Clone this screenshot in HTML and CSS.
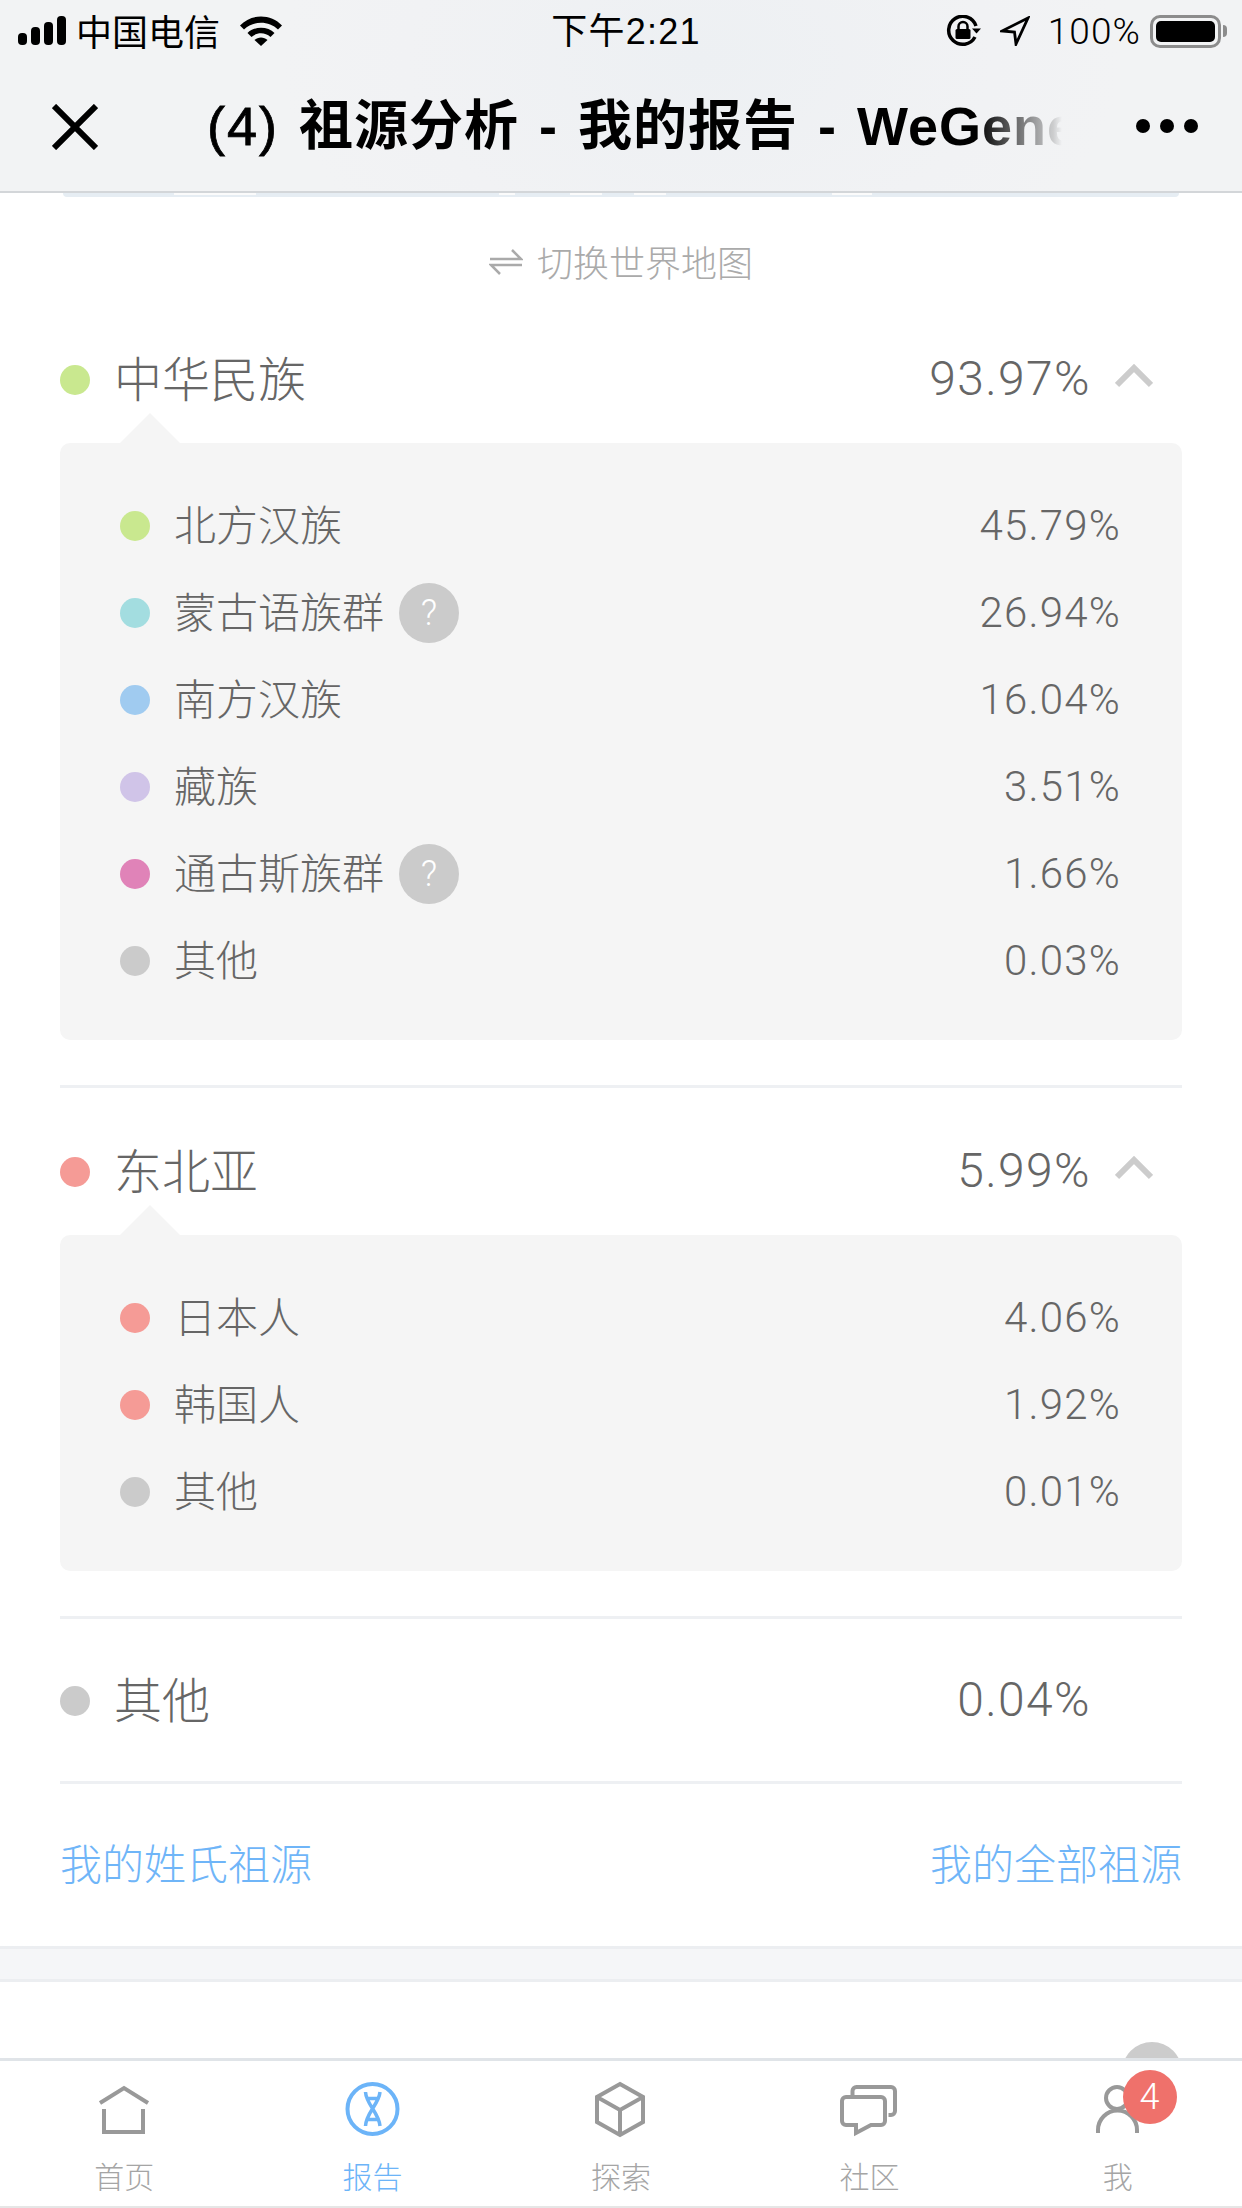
FILE: index.html
```html
<!DOCTYPE html>
<html lang="zh">
<head>
<meta charset="utf-8">
<title>祖源分析</title>
<link rel="stylesheet" href="styles.css">
</head>
<body>
<div class="phone">
  <header class="top">
    <div class="status">
      <div class="status-left">
        <svg class="signal" width="48" height="30" viewBox="0 0 48 30"><rect x="0" y="17" width="9" height="12" rx="4"/><rect x="13" y="11" width="9" height="18" rx="4"/><rect x="26" y="6" width="9" height="23" rx="4"/><rect x="39" y="0" width="9" height="29" rx="4"/></svg>
        <span class="carrier">中国电信</span>
        <svg class="wifi" width="42" height="30" viewBox="0 0 42 30"><path d="M0 9.500C11-2.500 31-2.500 42 9.500L38 13.500C29 4.500 13 4.500 4 13.500Z"/><path d="M7.500 17C14 10 28 10 34.500 17L30.500 21C25 16 17 16 11.500 21Z"/><path d="M14.500 24C18 20.500 24 20.500 27.500 24L21 30Z"/></svg>
      </div>
      <div class="clock">下午2:21</div>
      <div class="status-right">
        <svg class="lock" width="36" height="32" viewBox="0 0 36 32"><path class="lock-ring" d="M29 22A14 14 0 1 1 30 11"/><path d="M35 13.500H26L30.500 18.500Z"/><rect x="9.500" y="14" width="15" height="10" rx="1.500"/><path class="lock-ring thin" d="M12.500 14V11.500a4.500 4.500 0 0 1 9 0V14"/></svg>
        <svg class="arrow" width="30" height="30" viewBox="0 0 30 30"><path d="M28 2L2 15L14.500 16L16 28Z"/></svg>
        <span class="battery-pct">100%</span>
        <div class="battery"><div class="battery-fill"></div></div>
        <div class="battery-nub"></div>
      </div>
    </div>
    <nav class="bar">
      <svg class="close" width="46" height="46" viewBox="0 0 46 46"><path d="M2 2L44 44M44 2L2 44"/></svg>
      <h1 class="title"><span class="count">(4)</span> 祖源分析 - 我的报告 - WeGene</h1>
      <div class="more"><i></i><i></i><i></i></div>
    </nav>
  </header>

  <main class="content">
    <div class="map-edge"><i class="e1"></i><i class="e2"></i><i class="e3"></i><i class="e4"></i><i class="e5"></i></div>
    <div class="switch">
      <svg width="34" height="28" viewBox="0 0 34 28"><path d="M1 11H32L23 2M33 17H2L11 26"/></svg>
      <span>切换世界地图</span>
    </div>

    <section class="groups">
      <div class="head">
        <span class="dot d-green"></span><span class="head-name">中华民族</span>
        <span class="head-pct">93.97%</span>
        <svg class="chev" width="38" height="24" viewBox="0 0 38 24"><path d="M2 21L19 4L36 21"/></svg>
      </div>
      <div class="panel">
        <div class="row"><span class="dot d-green"></span><span class="row-name">北方汉族</span><span class="row-pct">45.79%</span></div>
        <div class="row"><span class="dot d-teal"></span><span class="row-name">蒙古语族群</span><span class="help">?</span><span class="row-pct">26.94%</span></div>
        <div class="row"><span class="dot d-blue"></span><span class="row-name">南方汉族</span><span class="row-pct">16.04%</span></div>
        <div class="row"><span class="dot d-purple"></span><span class="row-name">藏族</span><span class="row-pct">3.51%</span></div>
        <div class="row"><span class="dot d-pink"></span><span class="row-name">通古斯族群</span><span class="help">?</span><span class="row-pct">1.66%</span></div>
        <div class="row"><span class="dot d-grey"></span><span class="row-name">其他</span><span class="row-pct">0.03%</span></div>
      </div>
      <hr class="rule rule-a">
      <div class="head head-b">
        <span class="dot d-salmon"></span><span class="head-name">东北亚</span>
        <span class="head-pct">5.99%</span>
        <svg class="chev" width="38" height="24" viewBox="0 0 38 24"><path d="M2 21L19 4L36 21"/></svg>
      </div>
      <div class="panel">
        <div class="row"><span class="dot d-salmon"></span><span class="row-name">日本人</span><span class="row-pct">4.06%</span></div>
        <div class="row"><span class="dot d-salmon"></span><span class="row-name">韩国人</span><span class="row-pct">1.92%</span></div>
        <div class="row"><span class="dot d-grey"></span><span class="row-name">其他</span><span class="row-pct">0.01%</span></div>
      </div>
      <hr class="rule rule-a">
      <div class="head head-c">
        <span class="dot d-grey"></span><span class="head-name">其他</span>
        <span class="head-pct">0.04%</span>
        <span class="chev-slot"></span>
      </div>
      <hr class="rule">
      <div class="links"><span>我的姓氏祖源</span><span>我的全部祖源</span></div>
    </section>

    <div class="gap"></div>
    <div class="next"><span class="next-circle"></span></div>
  </main>

  <footer class="tabs">
    <div class="tab">
      <svg width="64" height="60" viewBox="0 0 64 60"><path d="M8 23L32 8L56 23M12 29V52H51V29"/></svg>
      <span>首页</span>
    </div>
    <div class="tab on">
      <svg width="64" height="60" viewBox="0 0 64 60"><circle cx="31.500" cy="29" r="25"/><path class="dna" d="M24.500 12C25 24 38 33 39 46M39 12C38 24 25 33 24.500 46M26 18.500H38M25 39.500H38.500"/></svg>
      <span>报告</span>
    </div>
    <div class="tab">
      <svg width="64" height="60" viewBox="0 0 64 60"><path d="M31 4L54 17V42L31 55L8 42V17ZM8 17L31 30L54 17M31 30V55"/></svg>
      <span>探索</span>
    </div>
    <div class="tab">
      <svg width="64" height="60" viewBox="0 0 64 60"><path d="M9 17H44a4 4 0 0 1 4 4V41a4 4 0 0 1-4 4H34L19 53V45H9a4 4 0 0 1-4-4V21a4 4 0 0 1 4-4Z"/><path d="M15.500 15V11a4 4 0 0 1 4-4H54a4 4 0 0 1 4 4V31a4 4 0 0 1-4 4H51.500"/></svg>
      <span>社区</span>
    </div>
    <div class="tab">
      <svg width="64" height="60" viewBox="0 0 64 60"><circle cx="31" cy="18" r="11"/><path d="M12 53V50A19.500 19.500 0 0 1 51 50V53"/></svg>
      <span>我</span>
      <b class="badge">4</b>
    </div>
  </footer>
</div>
</body>
</html>
```

FILE: styles.css
```css
* { box-sizing: border-box; }
html, body { margin: 0; padding: 0; background: #fff; }
body {
  font-family: "Noto Sans CJK SC", "Noto Sans", sans-serif;
  color: #666;
}
.phone {
  width: 1242px;
  height: 2208px;
  overflow: hidden;
  display: flex;
  flex-direction: column;
  background: #fff;
}

/* top chrome */
.top {
  flex: none;
  height: 193px;
  border-bottom: 2px solid #d3d6d9;
  background: radial-gradient(ellipse 420px 260px at 700px 60px, #edf0f3 0%, #f1f2f4 70%, #f2f3f4 100%);
  color: #000;
}
.status {
  height: 60px;
  display: grid;
  grid-template-columns: 1fr auto 1fr;
  align-items: center;
  font-size: 36px;
  line-height: 60px;
}
.status-left { display: flex; align-items: center; padding-left: 18px; }
.signal { margin-right: 10px; }
.signal rect { fill: #000; }
.carrier { font-family: "Noto Sans CJK SC", sans-serif; font-weight: 400; padding-bottom: 2px; line-height: 56px; }
.wifi { margin-left: 20px; }
.clock {
  font-family: "Liberation Sans", "Noto Sans CJK SC", sans-serif;
  font-size: 36px;
  font-weight: 400;
  letter-spacing: 1.200px;
  padding-top: 2px;
  margin-left: 10px;
}
.status-right {
  display: flex;
  align-items: center;
  justify-content: flex-end;
  padding-right: 15px;
}
.lock-ring { fill: none; stroke: #000; stroke-width: 3.500; }
.lock-ring.thin { stroke-width: 2.500; }
.arrow { margin-left: 18px; }
.arrow path { fill: none; stroke: #000; stroke-width: 2.800; stroke-linejoin: miter; }
.battery-pct {
  margin-left: 18px;
  font-family: "Roboto", sans-serif;
  font-weight: 300;
  font-size: 37px;
  letter-spacing: 1.100px;
  padding-top: 2px;
}
.battery {
  margin-left: 9px;
  width: 71px;
  height: 33px;
  border: 3px solid #8c8c8c;
  border-radius: 10px;
  padding: 3px;
}
.battery-fill { height: 100%; background: #000; border-radius: 5px; }
.battery-nub {
  width: 4px;
  height: 12px;
  margin-left: 2px;
  background: #8c8c8c;
  border-radius: 0 4px 4px 0;
}
.bar {
  height: 131px;
  display: flex;
  align-items: center;
  padding: 0 44px 0 52px;
}
.close { flex: none; margin-top: 2px; }
.close path { fill: none; stroke: #000; stroke-width: 6; }
.title {
  margin: 0 0 0 109px;
  width: 855px;
  flex: none;
  overflow: hidden;
  white-space: nowrap;
  font-family: "Liberation Sans", "Noto Sans CJK SC", sans-serif;
  font-size: 54px;
  line-height: 70px;
  font-weight: 700;
  letter-spacing: 1px;
  word-spacing: 4px;
  color: #000;
  -webkit-mask-image: linear-gradient(to right, #000 90%, rgba(0,0,0,.15) 99%, transparent 100%);
  mask-image: linear-gradient(to right, #000 90%, rgba(0,0,0,.15) 99%, transparent 100%);
}
.count { letter-spacing: 2px; font-weight: 400; -webkit-text-stroke: 0.800px #000; }
.more { margin-left: auto; display: flex; gap: 10px; }
.more i { width: 14px; height: 14px; border-radius: 50%; background: #000; }

/* content */
.content { flex: 1; min-height: 0; overflow: hidden; }
.map-edge {
  position: relative;
  height: 4px;
  margin: 0 63px;
  background: #e6edf3;
  border-radius: 0 0 10px 10px;
}
.map-edge i { position: absolute; top: 0; height: 2px; background: #fbfbfb; }
.map-edge .e1 { left: 111px; width: 82px; }
.map-edge .e2 { left: 436px; width: 16px; }
.map-edge .e3 { left: 507px; width: 32px; }
.map-edge .e4 { left: 571px; width: 32px; }
.map-edge .e5 { left: 769px; width: 40px; }
.switch {
  height: 133px;
  display: flex;
  align-items: center;
  justify-content: center;
  gap: 14px;
  color: #aaa;
  font-size: 36px;
  font-weight: 300;
}
.switch span { font-size: 36px; padding-bottom: 6px; line-height: 50px; }
.switch svg { margin-bottom: 3px; }
.switch path { fill: none; stroke: #aaa; stroke-width: 2.500; }

.groups { padding: 0 60px; }
.head { height: 100px; display: flex; align-items: center; }
.head-b { margin-top: 34px; }
.head-c { height: 162px; padding-top: 2px; }
.head .dot { margin-right: 24px; }
.head-name { font-size: 48px; font-weight: 300; color: #666; padding-bottom: 8px; line-height: 70px; }
.head-pct {
  margin-left: auto;
  font-family: "Roboto", sans-serif;
  font-weight: 300;
  font-size: 48px;
  letter-spacing: 1.400px;
  color: #666;
  padding-bottom: 4px;
}
.chev { flex: none; margin: 0 29px 9px 24px; }
.chev path { fill: none; stroke: #ccc; stroke-width: 6; }
.chev-slot { width: 91px; flex: none; }
.dot { flex: none; width: 30px; height: 30px; border-radius: 50%; }
.d-green { background: #c9e88f; }
.d-teal { background: #a3dde0; }
.d-blue { background: #a0cbf0; }
.d-purple { background: #d0c4e8; }
.d-pink { background: #e083b8; }
.d-grey { background: #cbcbcb; }
.d-salmon { background: #f59b96; }

.panel {
  position: relative;
  margin-top: 13px;
  padding: 39px 61px 36px 60px;
  background: #f5f5f5;
  border-radius: 10px;
}
.panel::before {
  content: "";
  position: absolute;
  left: 60px;
  top: -30px;
  border-left: 30px solid transparent;
  border-right: 30px solid transparent;
  border-bottom: 30px solid #f5f5f5;
}
.row { height: 87px; display: flex; align-items: center; }
.row .dot { margin-right: 24px; }
.row-name { font-size: 42px; font-weight: 300; color: #666; padding-bottom: 6px; line-height: 60px; }
.row-pct {
  margin-left: auto;
  font-family: "Roboto", sans-serif;
  font-weight: 300;
  font-size: 42px;
  letter-spacing: 1.200px;
  color: #666;
}
.help {
  margin-left: 15px;
  width: 60px;
  height: 60px;
  border-radius: 50%;
  background: #cbcbcb;
  color: #fff;
  font-family: "Roboto", sans-serif;
  font-weight: 300;
  font-size: 36px;
  line-height: 60px;
  text-align: center;
}
.rule { margin: 0; height: 3px; border: 0; background: #eef0f3; }
.rule-a { margin-top: 45px; }
.links {
  height: 162px;
  display: flex;
  align-items: center;
  justify-content: space-between;
  font-size: 42px;
  font-weight: 300;
  color: #6fb5f8;
}
.links span { padding-bottom: 6px; line-height: 60px; }
.gap {
  height: 36px;
  background: #f5f6f8;
  border-top: 3px solid #eceef1;
  border-bottom: 3px solid #eceef1;
}
.next { display: flex; justify-content: flex-end; padding: 60px 60px 0 0; }
.next-circle { width: 60px; height: 60px; border-radius: 50%; background: #ccc; flex: none; }

/* tab bar */
.tabs {
  flex: none;
  height: 150px;
  border-top: 3px solid #e0e4e8;
  border-bottom: 2px solid #e6e6e6;
  display: grid;
  grid-template-columns: repeat(5, 1fr);
  background: #fff;
}
.tab {
  position: relative;
  display: flex;
  flex-direction: column;
  align-items: center;
  padding-top: 19px;
  color: #a5a5a5;
  font-size: 30px;
  font-weight: 300;
  line-height: 40px;
}
.tab svg { display: block; margin-bottom: 15px; flex: none; }
.tab svg path, .tab svg circle { fill: none; stroke: #999; stroke-width: 4; }
.tab.on { color: #6cb4f8; }
.tab.on svg path, .tab.on svg circle { stroke: #6cb4f8; }
.tab.on svg .dna { stroke-width: 3.500; }
.badge {
  position: absolute;
  left: 129px;
  top: 9px;
  width: 54px;
  height: 54px;
  border-radius: 50%;
  background: #ef716b;
  color: #fff;
  font-family: "Roboto", sans-serif;
  font-weight: 300;
  font-size: 36px;
  line-height: 54px;
  text-align: center;
}
```
